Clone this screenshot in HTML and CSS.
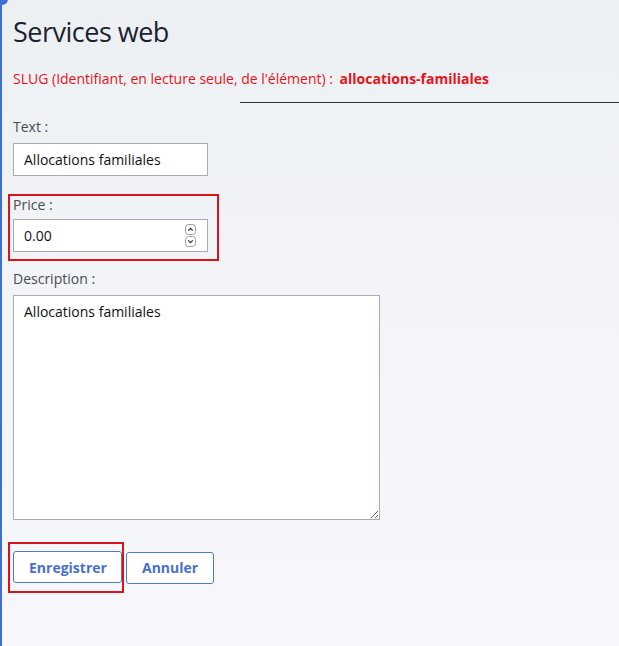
FILE: index.html
```html
<!DOCTYPE html>
<html lang="fr">
<head>
<meta charset="utf-8">
<title>Services web</title>
<link rel="stylesheet" href="styles.css">
</head>
<body>
<span class="corner-dot"></span>
<main class="page">
  <h1 class="title">Services web</h1>
  <p class="slug">SLUG (Identifiant, en lecture seule, de l'élément) : <strong class="slug-value">allocations-familiales</strong></p>
  <div class="rule-row"><span class="rule"></span></div>
  <form class="form">
    <div class="field">
      <label class="label" for="text">Text :</label>
      <input class="input" id="text" type="text" value="Allocations familiales">
    </div>
    <div class="field highlight highlight-field">
      <label class="label" for="price">Price :</label>
      <div class="number-wrap">
        <input class="input number" id="price" type="text" value="0.00">
        <span class="spinner">
          <svg class="spin-btn" width="11" height="11" viewBox="0 0 11 11"><rect x="0.5" y="0.5" width="10" height="10" rx="3" fill="#fff" stroke="#9a9a9a"/><path d="M3.2 6.6 L5.5 4.3 L7.8 6.6" fill="none" stroke="#333" stroke-width="1.2"/></svg>
          <svg class="spin-btn" width="11" height="11" viewBox="0 0 11 11"><rect x="0.5" y="0.5" width="10" height="10" rx="3" fill="#fff" stroke="#9a9a9a"/><path d="M3.2 4.4 L5.5 6.7 L7.8 4.4" fill="none" stroke="#333" stroke-width="1.2"/></svg>
        </span>
      </div>
    </div>
    <div class="field field-desc">
      <label class="label" for="desc">Description :</label>
      <textarea class="textarea" id="desc">Allocations familiales</textarea>
    </div>
    <div class="actions">
      <div class="highlight highlight-btn">
        <button class="btn" type="button">Enregistrer</button>
      </div>
      <button class="btn" type="button">Annuler</button>
    </div>
  </form>
</main>
</body>
</html>
```
FILE: styles.css
```css
html, body {
  height: 100%;
}
body {
  margin: 0;
  background: linear-gradient(180deg, #edf0f3 0%, #f3f5f8 55%, #f7f7fb 100%);
  border-left: 2px solid #3f6fd1;
  font-family: "Open Sans", "Noto Sans", sans-serif;
  position: relative;
  box-sizing: border-box;
  overflow: hidden;
}
.corner-dot {
  position: absolute;
  left: -6px;
  top: -7px;
  width: 12px;
  height: 12px;
  border-radius: 50%;
  background: #3f6fd1;
}
.corner-dot::after {
  content: "";
  position: absolute;
  left: 4px;
  top: 8px;
  width: 2px;
  height: 2px;
  border-radius: 50%;
  background: #fff;
}
.page {
  padding: 0 0 0 11px;
}
.title {
  margin: 0;
  padding-top: 14px;
  font-size: 27px;
  line-height: 36px;
  font-weight: 400;
  color: #1c2230;
  letter-spacing: -0.5px;
}
.slug {
  margin: 19px 0 0;
  font-size: 14px;
  line-height: 20px;
  color: #e8131b;
}
.slug-value {
  font-weight: 700;
  margin-left: 3px;
}
.rule-row {
  display: flex;
  justify-content: flex-end;
  margin-top: 13px;
}
.rule {
  width: 379px;
  height: 1px;
  background: #2e3138;
}
.form {
  margin-top: 14px;
}
.field {
  display: flex;
  flex-direction: column;
  align-items: flex-start;
}
.label {
  font-size: 14px;
  line-height: 20px;
  color: #484c55;
  margin-bottom: 6px;
}
.input {
  box-sizing: border-box;
  width: 195px;
  height: 33px;
  border: 1px solid #a9abb0;
  background: #fff;
  font: inherit;
  font-size: 14px;
  color: #111;
  padding: 0 10px;
  outline: none;
}
.field + .field {
  margin-top: 18px;
}
.highlight {
  border: 2px solid #d9121c;
  box-sizing: border-box;
}
.highlight-field {
  margin-left: -5px;
  width: 211px;
  padding: 0 10px 7px 3px;
}
.highlight-field .label {
  line-height: 18px;
  margin-bottom: 5px;
}
.field.field-desc {
  margin-top: 8px;
}
.number-wrap {
  position: relative;
}
.spinner {
  position: absolute;
  right: 12px;
  top: 5px;
  display: flex;
  flex-direction: column;
  gap: 1px;
}
.spin-btn {
  display: block;
}
.textarea {
  box-sizing: border-box;
  width: 367px;
  height: 225px;
  border: 1px solid #a9abb0;
  background: #fff;
  font: inherit;
  font-size: 14px;
  color: #111;
  padding: 6px 10px;
  resize: both;
  outline: none;
}
.actions {
  display: flex;
  align-items: center;
  gap: 2px;
  margin-top: 22px;
  margin-left: -5px;
}
.highlight-btn {
  padding: 7px 0 8px 3px;
}
.btn {
  box-sizing: border-box;
  height: 32px;
  padding: 0 15px;
  border: 1px solid #4f79cf;
  border-radius: 3px;
  background: #fff;
  color: #4a6fcf;
  font: inherit;
  font-size: 14px;
  font-weight: 700;
}
.highlight-btn .btn {
  width: 109px;
}
```
